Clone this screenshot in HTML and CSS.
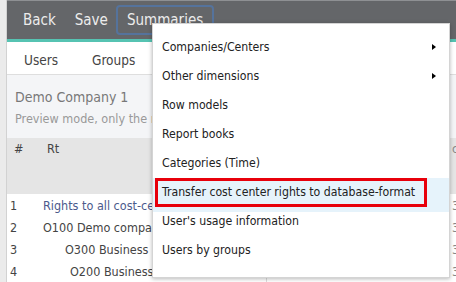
FILE: index.html
```html
<!DOCTYPE html>
<html>
<head><meta charset="utf-8"><title>Rights</title>
<link rel="stylesheet" href="styles.css">
</head>
<body>
 <div class="gutter"></div>
 <div class="page">
  <div class="nav">
   <span class="nav-item">Back</span>
   <span class="nav-item">Save</span>
   <span class="nav-item focus">Summaries</span>
  </div>
  <div class="tabs">
   <span class="tab">Users</span>
   <span class="tab">Groups</span>
  </div>
  <div class="info">
   <div class="company">Demo Company 1</div>
   <div class="note">Preview mode, only the rights of the selected user are shown</div>
  </div>
  <table class="grid">
   <thead>
    <tr><th class="c-no">#</th><th class="c-rt">Rt</th><th class="c-mid"></th><th class="c-end">co</th></tr>
   </thead>
   <tbody>
    <tr><td class="c-no">1</td><td class="c-rt link">Rights to all cost-centers</td><td class="c-mid"></td><td class="c-end">3rd</td></tr>
    <tr><td class="c-no">2</td><td class="c-rt">O100 Demo company 1</td><td class="c-mid"></td><td class="c-end">3rd</td></tr>
    <tr><td class="c-no">3</td><td class="c-rt lvl2">O300 Business sector</td><td class="c-mid"></td><td class="c-end">3rd</td></tr>
    <tr><td class="c-no">4</td><td class="c-rt lvl3">O200 Business-to-business</td><td class="c-mid"></td><td class="c-end">3rd</td></tr>
   </tbody>
  </table>
 </div>

 <div class="menu">
  <div class="item sub">Companies/Centers</div>
  <div class="item sub">Other dimensions</div>
  <div class="item">Row models</div>
  <div class="item">Report books</div>
  <div class="item">Categories (Time)</div>
  <div class="item hover">Transfer cost center rights to database-format</div>
  <div class="item">User's usage information</div>
  <div class="item">Users by groups</div>
 </div>
</body>
</html>
```

FILE: styles.css
```css
html{font-family:"DejaVu Sans Condensed","DejaVu Sans",sans-serif}
body{margin:0;padding:0;overflow:hidden;display:flex;height:282px;background:#fff}
.gutter{width:6px;flex:none;background:#ebebeb;border-right:1px solid #d2d2d2}
.page{flex:1;display:flex;flex-direction:column;min-width:0}

.nav{height:39px;border-top:1px solid #8e9093;border-bottom:3px solid #56c3b2;background:#646669;display:flex;align-items:center;gap:19px;padding-left:16px;font-size:15px;color:#ececec}
.nav-item{white-space:nowrap}
.nav .focus{height:26px;line-height:26px;padding:0 9px;margin-left:-11px;border:2px solid #55739c;border-radius:4px}

.tabs{height:33px;box-sizing:border-box;padding-top:3px;border-bottom:1px solid #dedede;display:flex;align-items:center;gap:34px;padding-left:17px;font-size:13.5px;color:#444}

.info{height:64px;background:#f4f5f7;padding-left:8px;box-sizing:border-box;padding-top:13px;white-space:nowrap;overflow:hidden}
.company{font-size:14px;color:#787878;line-height:18px}
.note{font-size:12.5px;color:#999;line-height:18px;margin-top:4px}

.grid{border-collapse:collapse;width:100%;table-layout:fixed;font-size:12.5px;color:#444}
.grid th{height:56px;background:#e5e5e5;font-weight:normal;text-align:left;vertical-align:top;padding:3px 0 0 0;box-sizing:border-box}
.grid td{height:22px;padding:0;white-space:nowrap;overflow:hidden}
.c-no{width:36px}
.grid th.c-no{padding-left:7px}
.grid td.c-no{padding-left:3px}
.c-rt{width:223px}
.grid th.c-rt{padding-left:4px}
.grid td.c-rt{border-right:1px solid #dcdcdc}
.c-mid{width:184px}
.grid .c-end{color:#888;padding-left:2px}
.link{color:#4b5a8c}
.lvl2{padding-left:22px !important}
.lvl3{padding-left:27px !important}

.menu{position:absolute;left:152px;top:23px;width:298px;height:255px;box-sizing:border-box;padding-top:9px;background:#fff;border:1px solid #d4d4d4;box-shadow:0 1px 4px rgba(0,0,0,.28);font-size:12.2px;color:#222}
.item{position:relative;height:29px;line-height:29px;padding-left:9px;white-space:nowrap}
.item.sub::after{content:"";position:absolute;right:13px;top:11px;border-left:4px solid #000;border-top:3.5px solid transparent;border-bottom:3.5px solid transparent}
.item.hover{background:#e6f3fb;box-shadow:0 5px 0 #e6f3fb}
.item.hover::before{content:"";position:absolute;left:2px;top:0;width:272px;height:29px;box-sizing:border-box;border:3px solid #e8000b}
```
